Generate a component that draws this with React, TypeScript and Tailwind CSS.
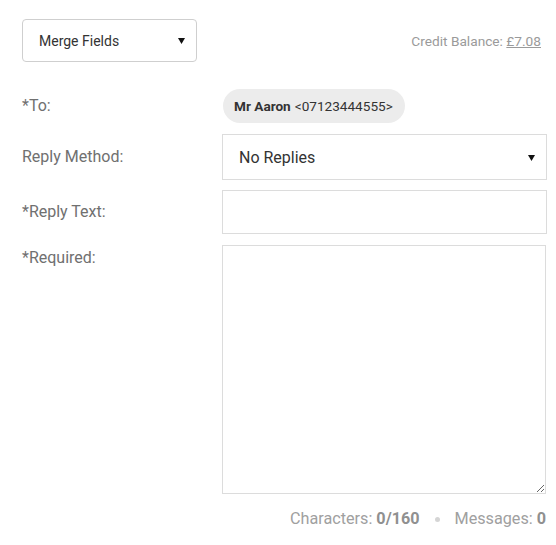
import React from 'react';

// Small solid caret used by the dropdown boxes
const Caret = () => (
  <svg width="7" height="6" viewBox="0 0 7 6" className="shrink-0">
    <polygon points="0,0 7,0 3.5,6" fill="#111" />
  </svg>
);

const FieldLabel = ({ children, top }: { children: React.ReactNode; top?: boolean }) => (
  <div className={`w-[200px] shrink-0 text-[16px] text-[#707070] ${top ? 'pt-[1px] self-start' : ''}`}>
    {children}
  </div>
);

export default function App() {
  return (
    <div
      className="w-[556px] h-[545px] bg-white pl-[22px] pr-[9px] pt-[19px]"
      style={{ fontFamily: 'Roboto, "Liberation Sans", sans-serif' }}
    >
      {/* Toolbar */}
      <div className="flex items-center justify-between">
        <div className="w-[175px] h-[43px] border border-[#cfcfcf] rounded-[4px] flex items-center justify-between pl-[16px] pr-[11px] pt-[1px] text-[14px] text-[#333]">
          <span>Merge Fields</span>
          <Caret />
        </div>
        <div className="text-[13.7px] text-[#9a9a9a] pr-[6px] pt-[1px]">
          Credit Balance: <span className="underline">£7.08</span>
        </div>
      </div>

      {/* Recipient */}
      <div className="flex items-center mt-[27px]">
        <FieldLabel>*To:</FieldLabel>
        <div className="ml-[1px] h-[34px] rounded-full bg-[#ececec] flex items-center pl-[11px] pr-[12px] text-[13.6px] text-[#333]">
          <span className="font-bold">Mr Aaron</span>
          <span className="ml-[4px]">&lt;07123444555&gt;</span>
        </div>
      </div>

      {/* Reply method */}
      <div className="flex items-center mt-[11px]">
        <FieldLabel>Reply Method:</FieldLabel>
        <div className="flex-1 h-[46px] border border-[#dcdcdc] flex items-center justify-between pl-[16px] pr-[11px] pt-[1px] text-[16px] text-[#333]">
          <span>No Replies</span>
          <Caret />
        </div>
      </div>

      {/* Reply text */}
      <div className="flex items-center mt-[10px]">
        <FieldLabel>*Reply Text:</FieldLabel>
        <input
          type="text"
          className="flex-1 h-[44px] border border-[#dcdcdc] outline-none px-[16px] text-[16px]"
        />
      </div>

      {/* Message body */}
      <div className="flex mt-[11px]">
        <FieldLabel top>*Required:</FieldLabel>
        <textarea className="flex-1 mr-[1px] h-[249px] border border-[#dcdcdc] outline-none p-[12px] text-[16px] resize" />
      </div>

      {/* Counters */}
      <div className="flex items-center justify-end mt-[13px] pr-[1px] text-[16.2px] text-[#a0a0a0]">
        <span>
          Characters: <span className="font-bold text-[#909090]">0/160</span>
        </span>
        <span className="mx-[15px] w-[5px] h-[5px] rounded-full bg-[#d5d5d5]" />
        <span>
          Messages: <span className="font-bold text-[#909090]">0</span>
        </span>
      </div>
    </div>
  );
}
